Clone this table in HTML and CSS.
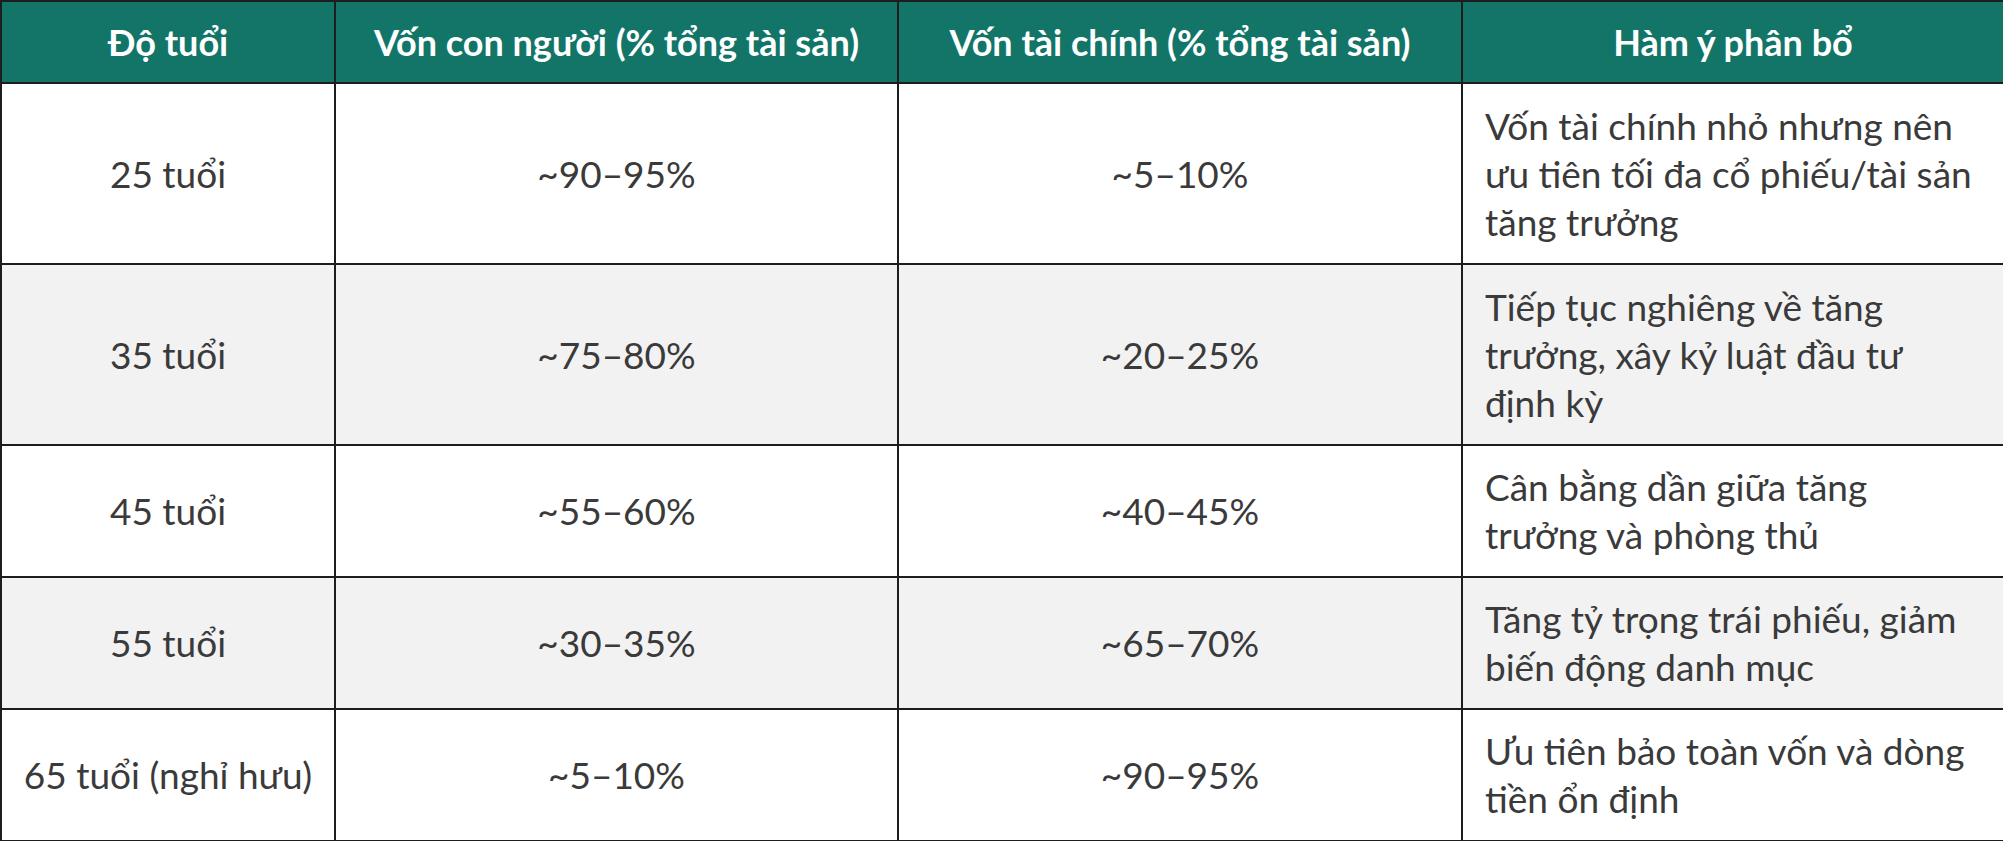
FILE: index.html
```html
<!DOCTYPE html>
<html lang="vi">
<head>
<meta charset="utf-8">
<title>Vốn con người và vốn tài chính theo độ tuổi</title>
<link rel="stylesheet" href="styles.css">
</head>
<body>
<table class="alloc">
  <colgroup>
    <col class="c-age">
    <col class="c-human">
    <col class="c-fin">
    <col class="c-note">
  </colgroup>
  <thead>
    <tr class="head-row">
      <th>Độ tuổi</th>
      <th>Vốn con người (% tổng tài sản)</th>
      <th>Vốn tài chính (% tổng tài sản)</th>
      <th>Hàm ý phân bổ</th>
    </tr>
  </thead>
  <tbody>
    <tr class="row tall">
      <td>25 tuổi</td>
      <td>~90–95%</td>
      <td>~5–10%</td>
      <td class="note">Vốn tài chính nhỏ nhưng nên ưu tiên tối đa cổ phiếu/tài sản tăng trưởng</td>
    </tr>
    <tr class="row tall alt">
      <td>35 tuổi</td>
      <td>~75–80%</td>
      <td>~20–25%</td>
      <td class="note">Tiếp tục nghiêng về tăng trưởng, xây kỷ luật đầu tư định kỳ</td>
    </tr>
    <tr class="row short">
      <td>45 tuổi</td>
      <td>~55–60%</td>
      <td>~40–45%</td>
      <td class="note">Cân bằng dần giữa tăng trưởng và phòng thủ</td>
    </tr>
    <tr class="row short alt">
      <td>55 tuổi</td>
      <td>~30–35%</td>
      <td>~65–70%</td>
      <td class="note">Tăng tỷ trọng trái phiếu, giảm biến động danh mục</td>
    </tr>
    <tr class="row short">
      <td>65 tuổi (nghỉ hưu)</td>
      <td>~5–10%</td>
      <td>~90–95%</td>
      <td class="note">Ưu tiên bảo toàn vốn và dòng tiền ổn định</td>
    </tr>
  </tbody>
</table>
</body>
</html>
```

FILE: styles.css
```css
html, body {
  margin: 0;
  padding: 0;
  background: #ffffff;
}

.alloc {
  width: 2003px;
  table-layout: fixed;
  border-collapse: collapse;
  font-family: Lato, "Open Sans", "Noto Sans", sans-serif;
  font-size: 37px;
  line-height: 48px;
  color: #3a3a3a;
}

.c-age { width: 334px; }
.c-human { width: 563px; }
.c-fin { width: 564px; }
.c-note { width: 542px; }

.alloc th,
.alloc td {
  border: 2px solid #1d1d1d;
  text-align: center;
  vertical-align: middle;
  padding: 0 8px;
}

.head-row th {
  height: 80px;
  background: #127568;
  color: #ffffff;
  font-weight: 700;
  font-size: 36px;
}

.row.tall td { height: 179px; }
.row.short td { height: 130px; }

.row.alt td { background: #f2f2f3; }

.alloc td.note {
  text-align: left;
  padding: 0 24px 0 22px;
}
```
